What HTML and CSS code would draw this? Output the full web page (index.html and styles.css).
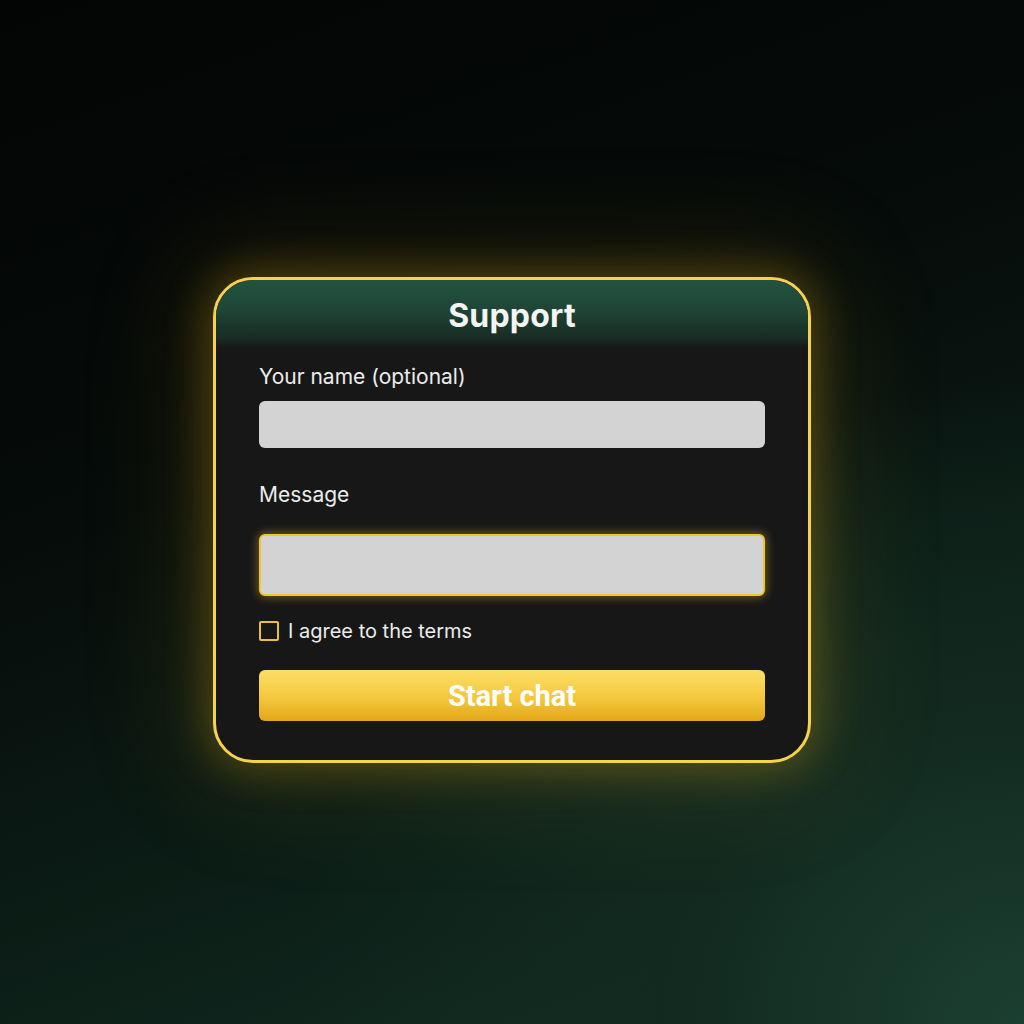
FILE: index.html
```html
<!DOCTYPE html>
<html>
<head>
<meta charset="utf-8">
<link rel="stylesheet" href="styles.css">
</head>
<body>
<main class="stage">
  <section class="card">
    <header class="card-header"><h1 class="title">Support</h1></header>
    <form class="card-body">
      <label class="label label-name">Your name (optional)</label>
      <div class="input input-name"></div>
      <label class="label label-msg">Message</label>
      <div class="input input-msg"></div>
      <div class="check-row">
        <span class="checkbox"></span>
        <span class="check-text">I agree to the terms</span>
      </div>
      <button type="button" class="btn">Start chat</button>
    </form>
  </section>
</main>
</body>
</html>
```
FILE: styles.css
```css
html, body {
  margin: 0;
  padding: 0;
  width: 1024px;
  height: 1024px;
  overflow: hidden;
}
body {
  font-family: Inter, "Noto Sans", sans-serif;
  background:
    radial-gradient(ellipse 900px 800px at 100% 100%, #1b3f31 0%, #12291f 40%, rgba(10,20,16,0) 80%),
    linear-gradient(160deg, #030404 0%, #060c0a 40%, #0d2119 75%, #143328 100%);
}
.stage {
  width: 1024px;
  height: 1024px;
  display: flex;
  align-items: flex-start;
  justify-content: center;
  box-sizing: border-box;
  padding-top: 277px;
}
.card {
  width: 598px;
  box-sizing: border-box;
  border: 3px solid #f6d24e;
  border-radius: 40px;
  background: #171717;
  overflow: hidden;
  box-shadow: 0 0 40px 8px rgba(214, 170, 30, 0.28), 0 0 110px 30px rgba(190, 150, 20, 0.13);
}
.card-header {
  height: 68px;
  display: flex;
  align-items: center;
  justify-content: center;
  background: linear-gradient(180deg, #23533f 0%, #1e4536 45%, #182c24 85%, #171717 100%);
}
.title {
  margin: 0;
  color: #f4f4f2;
  font-size: 32px;
  font-weight: 700;
  letter-spacing: 0.2px;
  position: relative;
  top: 1px;
}
.card-body {
  display: flex;
  flex-direction: column;
  padding: 17px 43px 39px 43px;
  margin: 0;
}
.label {
  color: #ececec;
  font-size: 21px;
  line-height: 24px;
  height: 24px;
}
.input {
  background: #d3d3d3;
  border-radius: 6px;
}
.input-name {
  margin-top: 12px;
  height: 47px;
}
.label-msg {
  margin-top: 35px;
}
.input-msg {
  margin-top: 27px;
  height: 58px;
  border: 2px solid #f1c431;
  box-shadow: 0 0 10px 1px rgba(240, 190, 40, 0.45);
}
.check-row {
  margin-top: 25px;
  display: flex;
  align-items: center;
  gap: 9px;
  height: 20px;
}
.checkbox {
  width: 20px;
  height: 20px;
  box-sizing: border-box;
  border: 2px solid #e9c232;
  border-radius: 2px;
  background: #171717;
}
.check-text {
  color: #ececec;
  font-size: 20px;
  line-height: 24px;
}
.btn {
  margin-top: 29px;
  height: 51px;
  border: 0;
  border-radius: 6px;
  background: linear-gradient(180deg, #fdde68 0%, #f4c73c 55%, #e3a718 100%);
  color: #ffffff;
  font-family: Roboto, Inter, sans-serif;
  font-size: 29px;
  font-weight: 700;
  padding: 0;
  cursor: pointer;
}
```
